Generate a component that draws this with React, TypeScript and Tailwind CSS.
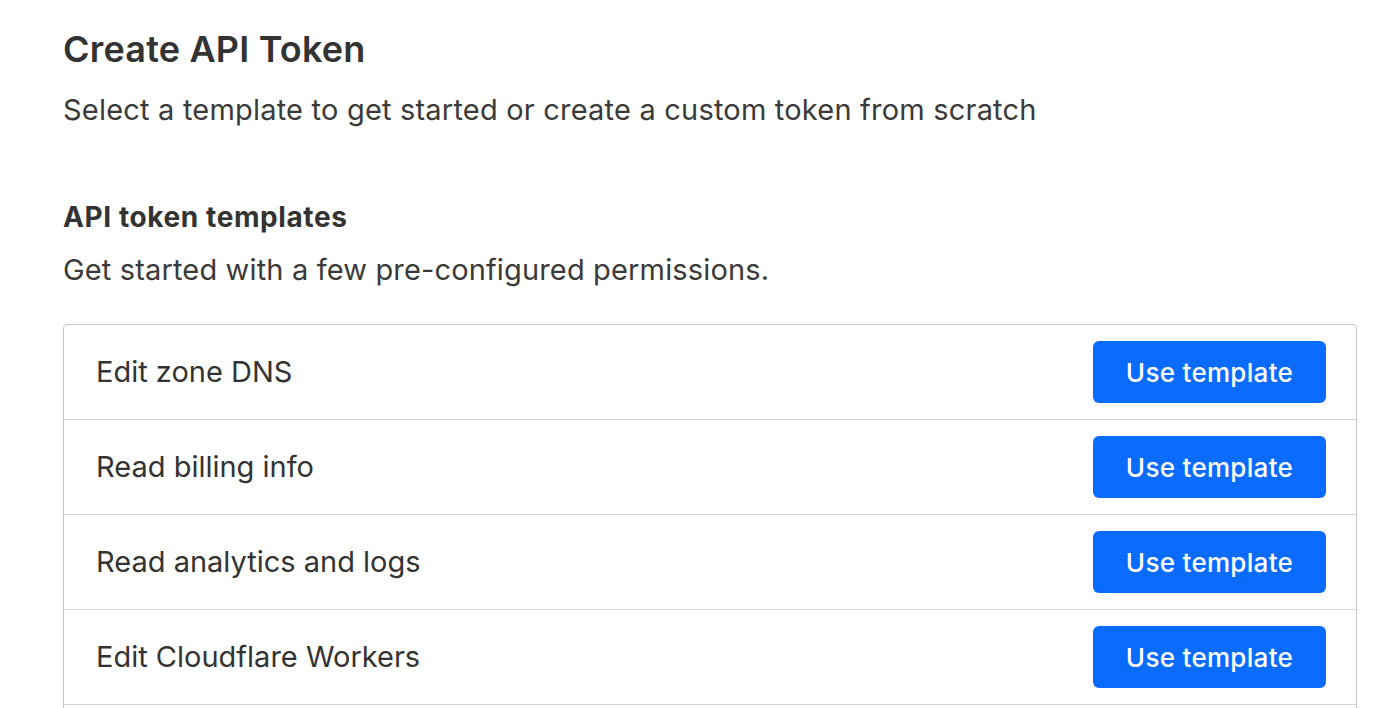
import React from "react";

const rows = [
  "Edit zone DNS",
  "Read billing info",
  "Read analytics and logs",
  "Edit Cloudflare Workers",
];

export default function App() {
  return (
    <div
      className="h-screen overflow-hidden bg-white pl-[63px] pr-[43px] pt-[27px] text-[#333333]"
      style={{ fontFamily: "Inter, 'Noto Sans', sans-serif" }}
    >
      <h1 className="text-[36px] font-semibold leading-[44px] tracking-[0.2px]">Create API Token</h1>
      <p className="mt-[21px] text-[29px] leading-[36px] tracking-[0.2px] text-[#3a3a3a]">
        Select a template to get started or create a custom token from scratch
      </p>
      <h2 className="mt-[71px] text-[28px] font-bold leading-[36px] tracking-[0.6px]">API token templates</h2>
      <p className="mt-[17px] text-[29px] leading-[36px] tracking-[0.15px] text-[#3a3a3a]">
        Get started with a few pre-configured permissions.
      </p>
      <div className="mt-[36px] rounded-t-[4px] border border-[#c6c6c6]">
        {rows.map((r, i) => (
          <div
            key={r}
            className={`flex items-center justify-between pl-[32px] pr-[30px] ${
              i > 0 ? "h-[95px] border-t border-[#d6d6d6]" : "h-[94px]"
            }`}
          >
            <span className="text-[29px] text-[#333333]">{r}</span>
            <button className="h-[62px] w-[233px] rounded-[6px] bg-[#0a6cff] text-[26px] font-medium tracking-[0.3px] text-white">
              Use template
            </button>
          </div>
        ))}
        <div className="h-[60px] border-t border-[#d6d6d6]" />
      </div>
    </div>
  );
}
